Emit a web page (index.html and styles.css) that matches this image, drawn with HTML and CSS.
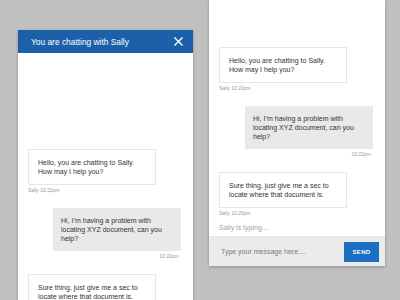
FILE: index.html
```html
<!DOCTYPE html>
<html>
<head>
<meta charset="utf-8">
<link rel="stylesheet" href="styles.css">
</head>
<body>
<div class="stage">
  <div class="panel panel-left">
    <div class="header">
      <span class="title">You are chatting with Sally</span>
      <svg class="close" width="9" height="9" viewBox="0 0 9 9"><path d="M1 1L8 8M8 1L1 8" stroke="#fff" stroke-width="1.4" stroke-linecap="square"/></svg>
    </div>
    <div class="messages messages-top">
      <div class="group agent">
        <div class="bubble">Hello, you are chatting to Sally.<br>How may I help you?</div>
        <div class="meta">Sally 10:21pm</div>
      </div>
      <div class="group user">
        <div class="bubble">Hi, I’m having a problem with locating XYZ document, can you help?</div>
        <div class="meta">10:22pm</div>
      </div>
      <div class="group agent">
        <div class="bubble">Sure thing, just give me a sec to locate where that document is.</div>
        <div class="meta">Sally 10:25pm</div>
      </div>
    </div>
  </div>
  <div class="panel panel-right">
    <div class="messages messages-bottom">
      <div class="group agent">
        <div class="bubble">Hello, you are chatting to Sally.<br>How may I help you?</div>
        <div class="meta">Sally 10:21pm</div>
      </div>
      <div class="group user">
        <div class="bubble">Hi, I’m having a problem with locating XYZ document, can you help?</div>
        <div class="meta">10:22pm</div>
      </div>
      <div class="group agent last">
        <div class="bubble">Sure thing, just give me a sec to locate where that document is.</div>
        <div class="meta">Sally 10:25pm</div>
      </div>
      <div class="typing">Sally is typing....</div>
    </div>
    <div class="composer">
      <span class="placeholder">Type your message here....</span>
      <span class="send">SEND</span>
    </div>
  </div>
</div>
</body>
</html>
```
FILE: styles.css
```css
html, body {
  margin: 0;
  padding: 0;
  width: 400px;
  height: 300px;
  overflow: hidden;
  background: #c0c0c0;
  font-family: "Liberation Sans", Arial, sans-serif;
}
.stage {
  display: flex;
  align-items: flex-start;
  padding-left: 18px;
  gap: 16px;
}
.panel {
  background: #fff;
  box-shadow: 0 1px 3px rgba(0,0,0,0.28);
  display: flex;
  flex-direction: column;
  overflow: hidden;
}
.panel-left {
  width: 175px;
  height: 290px;
  margin-top: 30px;
}
.panel-right {
  width: 176px;
  height: 266px;
}
.header {
  height: 23px;
  background: #1d60aa;
  display: flex;
  align-items: center;
  justify-content: space-between;
  padding: 0 10px 0 13px;
  flex-shrink: 0;
}
.title {
  color: #fff;
  font-size: 8.4px;
  line-height: 10px;
}
.close {
  display: block;
}
.messages {
  display: flex;
  flex-direction: column;
  padding: 0 12px 0 10px;
}
.messages-top {
  padding-top: 96px;
}
.messages-bottom {
  flex: 1;
  justify-content: flex-end;
  padding-bottom: 4px;
  min-height: 0;
}
.group {
  display: flex;
  flex-direction: column;
  margin-bottom: 14px;
  flex-shrink: 0;
}
.group.last {
  margin-bottom: 0;
}
.bubble {
  width: 128px;
  box-sizing: border-box;
  font-size: 7px;
  line-height: 9px;
  color: #333;
}
.agent {
  align-items: flex-start;
}
.agent .bubble {
  background: #fff;
  border: 1px solid #e6e6e6;
  padding: 8px 9px;
}
.user {
  align-items: flex-end;
}
.user .bubble {
  background: #e9e9e9;
  padding: 8px 8px;
}
.meta {
  font-size: 5px;
  line-height: 7px;
  margin-top: 2px;
  color: #9a9a9a;
}
.user .meta {
  margin-right: 2px;
}
.typing {
  margin-top: 6px;
  font-size: 7px;
  line-height: 9px;
  color: #a3a3a3;
  flex-shrink: 0;
}
.composer {
  height: 30px;
  flex-shrink: 0;
  background: #ebebeb;
  display: flex;
  align-items: center;
  justify-content: space-between;
  padding: 0 6px 0 12px;
}
.placeholder {
  font-size: 7px;
  color: #7a7a7a;
}
.send {
  width: 35px;
  height: 20px;
  background: #1b6ec2;
  color: #fff;
  font-weight: bold;
  font-size: 6px;
  letter-spacing: 0.3px;
  display: flex;
  align-items: center;
  justify-content: center;
  margin-top: 2px;
}
```
